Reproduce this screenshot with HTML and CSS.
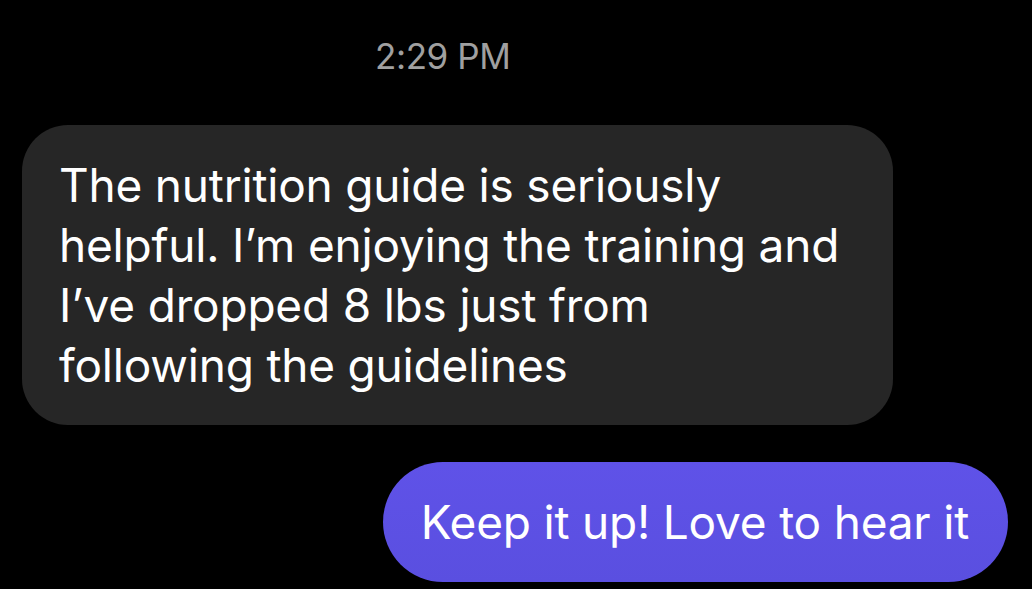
FILE: index.html
```html
<!DOCTYPE html>
<html lang="en">
<head>
    <meta charset="UTF-8">
    <meta name="viewport" content="width=device-width, initial-scale=1.0">
    <title>Messages</title>
    <link rel="stylesheet" href="styles.css">
</head>
<body>
    <div class="thread">
        <div class="timestamp">2:29 PM</div>

        <div class="bubble incoming">
            The nutrition guide is seriously helpful. I’m enjoying the training and I’ve dropped 8 lbs just from following the guidelines
        </div>

        <div class="bubble outgoing">
            Keep it up! Love to hear it
        </div>
    </div>
</body>
</html>
```

FILE: styles.css
```css
* {
    box-sizing: border-box;
    margin: 0;
    padding: 0;
}

body {
    font-family: 'Inter', 'Roboto', sans-serif;
    background: #000;
    width: 1032px;
    height: 589px;
    overflow: hidden;
}

.thread {
    display: flex;
    flex-direction: column;
    padding: 36px 24px 0 22px;
}

.timestamp {
    color: #a0a0a0;
    font-size: 35px;
    line-height: 40px;
    padding-left: 353px;
    margin-bottom: 49px;
    letter-spacing: -0.4px;
}

.bubble {
    color: #fff;
    font-size: 46px;
    line-height: 60px;
    letter-spacing: -0.2px;
}

.incoming {
    width: 871px;
    height: 300px;
    background: #262626;
    border-radius: 46px;
    padding: 30px 47px 30px 37px;
}

.outgoing {
    align-self: flex-end;
    margin-top: 37px;
    height: 120px;
    background: linear-gradient(to bottom, #5f52e8, #5a4fe0);
    border-radius: 60px;
    padding: 30px 39px 30px 38px;
}
```
